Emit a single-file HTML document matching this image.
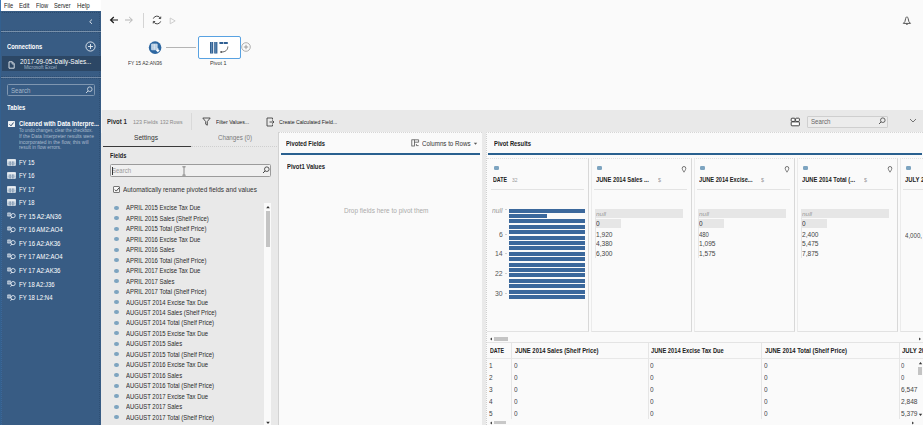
<!DOCTYPE html>
<html><head><meta charset="utf-8"><style>
html,body{margin:0;padding:0;}
body{width:923px;height:425px;overflow:hidden;position:relative;background:#fafafa;font-family:"Liberation Sans", sans-serif;}
div,span{box-sizing:border-box;}
</style></head><body>
<div style="position:absolute;left:0px;top:0px;width:101px;height:11px;background:#ffffff;"></div>
<div style="left:3.90px;position:absolute;top:2.65px;font-size:6.5px;line-height:6.5px;font-weight:400;font-style:normal;color:#222;white-space:nowrap;transform:scaleX(0.8680);transform-origin:0 0;">File</div>
<div style="left:18.90px;position:absolute;top:2.65px;font-size:6.5px;line-height:6.5px;font-weight:400;font-style:normal;color:#222;white-space:nowrap;transform:scaleX(0.9283);transform-origin:0 0;">Edit</div>
<div style="left:35.80px;position:absolute;top:2.65px;font-size:6.5px;line-height:6.5px;font-weight:400;font-style:normal;color:#222;white-space:nowrap;transform:scaleX(0.8810);transform-origin:0 0;">Flow</div>
<div style="left:54.00px;position:absolute;top:2.65px;font-size:6.5px;line-height:6.5px;font-weight:400;font-style:normal;color:#222;white-space:nowrap;transform:scaleX(0.8666);transform-origin:0 0;">Server</div>
<div style="left:77.00px;position:absolute;top:2.65px;font-size:6.5px;line-height:6.5px;font-weight:400;font-style:normal;color:#222;white-space:nowrap;transform:scaleX(0.9495);transform-origin:0 0;">Help</div>
<div style="position:absolute;left:0px;top:11px;width:101px;height:414px;background:#385c84;"></div>
<div style="position:absolute;left:0px;top:11px;width:1px;height:414px;background:#33608f;"></div>
<div style="position:absolute;left:1px;top:200px;width:1px;height:225px;background:transparent;border-left:1px dotted #3a689a"></div>
<div style="position:absolute;left:0px;top:0px;width:1px;height:11px;background:#3b78b8;"></div>
<div style="position:absolute;left:2px;top:12px;width:97px;height:1px;background:transparent;border-top:1px dotted #2a4a6c"></div>
<div style="position:absolute;left:99px;top:12px;width:1px;height:413px;background:transparent;border-left:1px dotted #2f5075"></div>
<div style="position:absolute;left:1px;top:31px;width:100px;height:1px;background:#7890aa;"></div>
<div style="position:absolute;left:1px;top:30px;width:100px;height:1px;background:transparent;border-top:1px dotted #2f5075"></div>
<div style="position:absolute;left:1px;top:32px;width:100px;height:1px;background:transparent;border-top:1px dotted #2f5075"></div>
<svg style="position:absolute;left:88px;top:18px" width="6" height="8" viewBox="0 0 6 8"><path d="M4 1.5 L1.7 3.7 L4 5.9" fill="none" stroke="#dfe6ee" stroke-width="0.9"/></svg>
<div style="left:6.80px;position:absolute;top:42.80px;font-size:7px;line-height:7px;font-weight:700;font-style:normal;color:#ffffff;white-space:nowrap;transform:scaleX(0.8304);transform-origin:0 0;">Connections</div>
<svg style="position:absolute;left:85px;top:41px" width="11" height="11" viewBox="0 0 11 11"><circle cx="5.5" cy="5.5" r="4.6" fill="none" stroke="#e6ecf2" stroke-width="0.9"/><path d="M5.5 3 V8 M3 5.5 H8" stroke="#e6ecf2" stroke-width="0.9"/></svg>
<div style="position:absolute;left:2px;top:56px;width:99px;height:15px;background:#2c4765;"></div>
<svg style="position:absolute;left:8px;top:60.5px" width="8" height="8" viewBox="0 0 8 8"><path d="M1 0.8 H4.3 L6.2 2.7 V7.2 H1 Z" fill="none" stroke="#e6ecf2" stroke-width="0.9"/><path d="M4.1 0.8 V3 H6.2" fill="none" stroke="#e6ecf2" stroke-width="0.7"/></svg>
<div style="left:19.90px;position:absolute;top:57.90px;font-size:7px;line-height:7px;font-weight:400;font-style:normal;color:#ffffff;white-space:nowrap;transform:scaleX(0.8983);transform-origin:0 0;">2017-09-05-Daily-Sales...</div>
<div style="left:24.00px;position:absolute;top:64.90px;font-size:5px;line-height:5px;font-weight:400;font-style:normal;color:#9fb2c6;white-space:nowrap;transform:scaleX(0.9703);transform-origin:0 0;">Microsoft Excel</div>
<div style="position:absolute;left:1px;top:77px;width:100px;height:1px;background:#7088a4;"></div>
<div style="position:absolute;left:1px;top:76px;width:100px;height:1px;background:transparent;border-top:1px dotted #2f5075"></div>
<div style="position:absolute;left:1px;top:78px;width:100px;height:1px;background:transparent;border-top:1px dotted #2f5075"></div>
<div style="position:absolute;left:7.4px;top:83.8px;width:87.6px;height:12px;background:transparent;border:1px solid #7f96b0;border-radius:1.5px"></div>
<div style="left:10.70px;position:absolute;top:87.65px;font-size:6.5px;line-height:6.5px;font-weight:400;font-style:normal;color:#a5b6c9;white-space:nowrap;transform:scaleX(0.9462);transform-origin:0 0;">Search</div>
<svg style="position:absolute;left:85px;top:86px" width="8" height="8" viewBox="0 0 8 8"><circle cx="4.8" cy="3.2" r="2.3" fill="none" stroke="#c9d4e0" stroke-width="0.9"/><path d="M3.2 4.8 L1 7" stroke="#c9d4e0" stroke-width="1"/></svg>
<div style="left:7.00px;position:absolute;top:104.00px;font-size:7px;line-height:7px;font-weight:700;font-style:normal;color:#ffffff;white-space:nowrap;transform:scaleX(0.8496);transform-origin:0 0;">Tables</div>
<div style="position:absolute;left:7.9px;top:120.5px;width:6.9px;height:6.3px;background:#eef1f4;border-radius:0.6px"></div>
<svg style="position:absolute;left:7.9px;top:120.5px" width="7" height="7" viewBox="0 0 7 7"><path d="M1.5 3.3 L3 4.8 L5.6 1.5" fill="none" stroke="#2d4b6d" stroke-width="1"/></svg>
<div style="left:18.80px;position:absolute;top:120.00px;font-size:7px;line-height:7px;font-weight:700;font-style:normal;color:#ffffff;white-space:nowrap;transform:scaleX(0.8498);transform-origin:0 0;">Cleaned with Data Interpre...</div>
<div style="left:19.30px;position:absolute;top:128.10px;font-size:5px;line-height:5px;font-weight:400;font-style:normal;color:#a9bbcd;white-space:nowrap;transform:scaleX(0.8779);transform-origin:0 0;">To undo changes, clear the checkbox.</div>
<div style="left:19.30px;position:absolute;top:133.80px;font-size:5px;line-height:5px;font-weight:400;font-style:normal;color:#a9bbcd;white-space:nowrap;transform:scaleX(0.9871);transform-origin:0 0;">If the Data Interpreter results were</div>
<div style="left:19.30px;position:absolute;top:139.50px;font-size:5px;line-height:5px;font-weight:400;font-style:normal;color:#a9bbcd;white-space:nowrap;transform:scaleX(0.9913);transform-origin:0 0;">incorporated in the flow, this will</div>
<div style="left:19.30px;position:absolute;top:145.10px;font-size:5px;line-height:5px;font-weight:400;font-style:normal;color:#a9bbcd;white-space:nowrap;transform:scaleX(0.9719);transform-origin:0 0;">result in flow errors.</div>
<svg style="position:absolute;left:7px;top:159px" width="9" height="7" viewBox="0 0 9 7"><rect x="0.4" y="0.4" width="8.2" height="6.2" rx="0.8" fill="#c2cfdc" stroke="#e8edf2" stroke-width="0.8"/><rect x="0.4" y="0.4" width="8.2" height="2" fill="#e8edf2"/><path d="M3.1 2.4 V6.6 M5.9 2.4 V6.6" stroke="#4f6f91" stroke-width="0.8"/><path d="M0.4 4.5 H8.6" stroke="#9fb1c5" stroke-width="0.5"/></svg>
<div style="left:18.80px;position:absolute;top:158.90px;font-size:7px;line-height:7px;font-weight:400;font-style:normal;color:#ffffff;white-space:nowrap;transform:scaleX(0.8350);transform-origin:0 0;">FY 15</div>
<svg style="position:absolute;left:7px;top:172px" width="9" height="7" viewBox="0 0 9 7"><rect x="0.4" y="0.4" width="8.2" height="6.2" rx="0.8" fill="#c2cfdc" stroke="#e8edf2" stroke-width="0.8"/><rect x="0.4" y="0.4" width="8.2" height="2" fill="#e8edf2"/><path d="M3.1 2.4 V6.6 M5.9 2.4 V6.6" stroke="#4f6f91" stroke-width="0.8"/><path d="M0.4 4.5 H8.6" stroke="#9fb1c5" stroke-width="0.5"/></svg>
<div style="left:18.80px;position:absolute;top:172.30px;font-size:7px;line-height:7px;font-weight:400;font-style:normal;color:#ffffff;white-space:nowrap;transform:scaleX(0.8350);transform-origin:0 0;">FY 16</div>
<svg style="position:absolute;left:7px;top:186px" width="9" height="7" viewBox="0 0 9 7"><rect x="0.4" y="0.4" width="8.2" height="6.2" rx="0.8" fill="#c2cfdc" stroke="#e8edf2" stroke-width="0.8"/><rect x="0.4" y="0.4" width="8.2" height="2" fill="#e8edf2"/><path d="M3.1 2.4 V6.6 M5.9 2.4 V6.6" stroke="#4f6f91" stroke-width="0.8"/><path d="M0.4 4.5 H8.6" stroke="#9fb1c5" stroke-width="0.5"/></svg>
<div style="left:18.80px;position:absolute;top:185.70px;font-size:7px;line-height:7px;font-weight:400;font-style:normal;color:#ffffff;white-space:nowrap;transform:scaleX(0.8350);transform-origin:0 0;">FY 17</div>
<svg style="position:absolute;left:7px;top:199px" width="9" height="7" viewBox="0 0 9 7"><rect x="0.4" y="0.4" width="8.2" height="6.2" rx="0.8" fill="#c2cfdc" stroke="#e8edf2" stroke-width="0.8"/><rect x="0.4" y="0.4" width="8.2" height="2" fill="#e8edf2"/><path d="M3.1 2.4 V6.6 M5.9 2.4 V6.6" stroke="#4f6f91" stroke-width="0.8"/><path d="M0.4 4.5 H8.6" stroke="#9fb1c5" stroke-width="0.5"/></svg>
<div style="left:18.80px;position:absolute;top:199.10px;font-size:7px;line-height:7px;font-weight:400;font-style:normal;color:#ffffff;white-space:nowrap;transform:scaleX(0.8350);transform-origin:0 0;">FY 18</div>
<svg style="position:absolute;left:7px;top:212.3px" width="10" height="9" viewBox="0 0 10 9"><rect x="0.2" y="0.6" width="3.8" height="3.8" rx="0.7" fill="#c9d5e2"/><path d="M0.2 2.1 H4 M2.1 2.1 V4.4" stroke="#58779a" stroke-width="0.5"/><circle cx="6.1" cy="3.6" r="2.1" fill="none" stroke="#e2e8ef" stroke-width="0.9"/><path d="M4.7 5.1 L3.6 6.7" stroke="#e2e8ef" stroke-width="1"/></svg>
<div style="left:18.90px;position:absolute;top:212.80px;font-size:7px;line-height:7px;font-weight:400;font-style:normal;color:#ffffff;white-space:nowrap;transform:scaleX(0.8810);transform-origin:0 0;">FY 15 A2:AN36</div>
<svg style="position:absolute;left:7px;top:225.85000000000002px" width="10" height="9" viewBox="0 0 10 9"><rect x="0.2" y="0.6" width="3.8" height="3.8" rx="0.7" fill="#c9d5e2"/><path d="M0.2 2.1 H4 M2.1 2.1 V4.4" stroke="#58779a" stroke-width="0.5"/><circle cx="6.1" cy="3.6" r="2.1" fill="none" stroke="#e2e8ef" stroke-width="0.9"/><path d="M4.7 5.1 L3.6 6.7" stroke="#e2e8ef" stroke-width="1"/></svg>
<div style="left:18.90px;position:absolute;top:226.35px;font-size:7px;line-height:7px;font-weight:400;font-style:normal;color:#ffffff;white-space:nowrap;transform:scaleX(0.8622);transform-origin:0 0;">FY 16 AM2:AO4</div>
<svg style="position:absolute;left:7px;top:239.4px" width="10" height="9" viewBox="0 0 10 9"><rect x="0.2" y="0.6" width="3.8" height="3.8" rx="0.7" fill="#c9d5e2"/><path d="M0.2 2.1 H4 M2.1 2.1 V4.4" stroke="#58779a" stroke-width="0.5"/><circle cx="6.1" cy="3.6" r="2.1" fill="none" stroke="#e2e8ef" stroke-width="0.9"/><path d="M4.7 5.1 L3.6 6.7" stroke="#e2e8ef" stroke-width="1"/></svg>
<div style="left:18.90px;position:absolute;top:239.90px;font-size:7px;line-height:7px;font-weight:400;font-style:normal;color:#ffffff;white-space:nowrap;transform:scaleX(0.8691);transform-origin:0 0;">FY 16 A2:AK36</div>
<svg style="position:absolute;left:7px;top:252.95000000000005px" width="10" height="9" viewBox="0 0 10 9"><rect x="0.2" y="0.6" width="3.8" height="3.8" rx="0.7" fill="#c9d5e2"/><path d="M0.2 2.1 H4 M2.1 2.1 V4.4" stroke="#58779a" stroke-width="0.5"/><circle cx="6.1" cy="3.6" r="2.1" fill="none" stroke="#e2e8ef" stroke-width="0.9"/><path d="M4.7 5.1 L3.6 6.7" stroke="#e2e8ef" stroke-width="1"/></svg>
<div style="left:18.90px;position:absolute;top:253.45px;font-size:7px;line-height:7px;font-weight:400;font-style:normal;color:#ffffff;white-space:nowrap;transform:scaleX(0.8622);transform-origin:0 0;">FY 17 AM2:AO4</div>
<svg style="position:absolute;left:7px;top:266.5px" width="10" height="9" viewBox="0 0 10 9"><rect x="0.2" y="0.6" width="3.8" height="3.8" rx="0.7" fill="#c9d5e2"/><path d="M0.2 2.1 H4 M2.1 2.1 V4.4" stroke="#58779a" stroke-width="0.5"/><circle cx="6.1" cy="3.6" r="2.1" fill="none" stroke="#e2e8ef" stroke-width="0.9"/><path d="M4.7 5.1 L3.6 6.7" stroke="#e2e8ef" stroke-width="1"/></svg>
<div style="left:18.90px;position:absolute;top:267.00px;font-size:7px;line-height:7px;font-weight:400;font-style:normal;color:#ffffff;white-space:nowrap;transform:scaleX(0.8691);transform-origin:0 0;">FY 17 A2:AK36</div>
<svg style="position:absolute;left:7px;top:280.05px" width="10" height="9" viewBox="0 0 10 9"><rect x="0.2" y="0.6" width="3.8" height="3.8" rx="0.7" fill="#c9d5e2"/><path d="M0.2 2.1 H4 M2.1 2.1 V4.4" stroke="#58779a" stroke-width="0.5"/><circle cx="6.1" cy="3.6" r="2.1" fill="none" stroke="#e2e8ef" stroke-width="0.9"/><path d="M4.7 5.1 L3.6 6.7" stroke="#e2e8ef" stroke-width="1"/></svg>
<div style="left:18.90px;position:absolute;top:280.55px;font-size:7px;line-height:7px;font-weight:400;font-style:normal;color:#ffffff;white-space:nowrap;transform:scaleX(0.8471);transform-origin:0 0;">FY 18 A2:J36</div>
<svg style="position:absolute;left:7px;top:293.6px" width="10" height="9" viewBox="0 0 10 9"><rect x="0.2" y="0.6" width="3.8" height="3.8" rx="0.7" fill="#c9d5e2"/><path d="M0.2 2.1 H4 M2.1 2.1 V4.4" stroke="#58779a" stroke-width="0.5"/><circle cx="6.1" cy="3.6" r="2.1" fill="none" stroke="#e2e8ef" stroke-width="0.9"/><path d="M4.7 5.1 L3.6 6.7" stroke="#e2e8ef" stroke-width="1"/></svg>
<div style="left:18.90px;position:absolute;top:294.10px;font-size:7px;line-height:7px;font-weight:400;font-style:normal;color:#ffffff;white-space:nowrap;transform:scaleX(0.8549);transform-origin:0 0;">FY 18 L2:N4</div>
<svg style="position:absolute;left:108.5px;top:15px" width="10" height="10" viewBox="0 0 10 10"><path d="M9 5 H2 M4.8 2 L1.6 5 L4.8 8" fill="none" stroke="#1a1a1a" stroke-width="1.2"/></svg>
<svg style="position:absolute;left:123.5px;top:15px" width="10" height="10" viewBox="0 0 10 10"><path d="M1 5 H8 M5.2 2 L8.4 5 L5.2 8" fill="none" stroke="#b4b4b4" stroke-width="1"/></svg>
<div style="position:absolute;left:143px;top:13px;width:1px;height:15px;background:#d4d4d4;"></div>
<svg style="position:absolute;left:151px;top:14px" width="12" height="12" viewBox="0 0 12 12"><path d="M2.3 4.6 A3.9 3.9 0 0 1 9.4 4.2 M9.7 7.4 A3.9 3.9 0 0 1 2.6 7.8" fill="none" stroke="#333" stroke-width="0.9"/><path d="M9.8 2.6 L9.6 4.6 L7.8 4.4" fill="none" stroke="#333" stroke-width="0.9"/><path d="M2.2 9.4 L2.4 7.4 L4.2 7.6" fill="none" stroke="#333" stroke-width="0.9"/></svg>
<svg style="position:absolute;left:168.5px;top:16.5px" width="8" height="8" viewBox="0 0 8 8"><path d="M1.2 1 L6.2 3.9 L1.2 6.8 Z" fill="none" stroke="#c8c8c8" stroke-width="0.9"/></svg>
<svg style="position:absolute;left:902px;top:16px" width="10" height="10" viewBox="0 0 10 10"><path d="M4.9 0.9 C4.2 0.9 3.9 1.6 3.7 2.4 L2.9 5.6 L1.3 7.4 H8.5 L6.9 5.6 L6.1 2.4 C5.9 1.6 5.6 0.9 4.9 0.9 Z" fill="none" stroke="#444" stroke-width="0.9"/><path d="M4 8.3 H5.8" stroke="#555" stroke-width="0.9"/></svg>
<svg style="position:absolute;left:148px;top:40px" width="15" height="15" viewBox="0 0 15 15"><circle cx="7.1" cy="7.6" r="6.3" fill="#2d67a1"/><rect x="3.6" y="4" width="5.6" height="5.8" fill="#a9c3dc"/><path d="M3.6 4 H9.2 V9.8 H3.6 Z M3.6 5.9 H9.2 M3.6 7.9 H9.2 M6.4 4 V9.8" fill="none" stroke="#e6eef6" stroke-width="0.6"/><path d="M9.8 8.3 V11.4 M8.4 10 L9.8 11.5 L11.2 10" fill="none" stroke="#ffffff" stroke-width="1.1"/></svg>
<div style="position:absolute;left:166px;top:46.6px;width:29.5px;height:1px;background:#b4b4b4;"></div>
<div style="position:absolute;left:198px;top:36.2px;width:43px;height:23px;background:#ffffff;border:1.6px solid #58a2e2;border-radius:2px"></div>
<svg style="position:absolute;left:209px;top:41px" width="21" height="14" viewBox="0 0 21 14"><rect x="1" y="1" width="3.2" height="11.5" fill="#2f5f92"/><rect x="5.2" y="1" width="3.2" height="11.5" fill="#2f5f92"/><path d="M2.6 1 V12.5 M6.8 1 V12.5" stroke="#8aaed0" stroke-width="0.6"/><path d="M10.4 2 H14.4 M15 2 H18.8" stroke="#2f5f92" stroke-width="1.8"/><path d="M18.8 5.5 C18.8 9 16.5 11 12.5 11" fill="none" stroke="#555" stroke-width="0.9"/><circle cx="12.2" cy="11" r="1" fill="#555"/></svg>
<svg style="position:absolute;left:240.5px;top:42px" width="10" height="10" viewBox="0 0 10 10"><circle cx="5" cy="5" r="4.3" fill="#fafafa" stroke="#9a9a9a" stroke-width="0.8"/><path d="M5 2.8 V7.2 M2.8 5 H7.2" stroke="#8a8a8a" stroke-width="0.8"/></svg>
<div style="left:127.80px;position:absolute;top:60.10px;font-size:6px;line-height:6px;font-weight:400;font-style:normal;color:#333;white-space:nowrap;transform:scaleX(0.8242);transform-origin:0 0;">FY 15 A2:AN36</div>
<div style="left:209.95px;position:absolute;top:60.20px;font-size:6px;line-height:6px;font-weight:400;font-style:normal;color:#333;white-space:nowrap;transform:scaleX(0.8995);transform-origin:0 0;">Pivot 1</div>
<div style="position:absolute;left:101px;top:110.2px;width:822px;height:22.4px;background:#e9e9e9;"></div>
<div style="position:absolute;left:101px;top:110.2px;width:1px;height:315px;background:#f3f3f3;"></div>
<div style="left:107.20px;position:absolute;top:117.80px;font-size:7px;line-height:7px;font-weight:700;font-style:normal;color:#2a2a2a;white-space:nowrap;transform:scaleX(0.8626);transform-origin:0 0;">Pivot 1</div>
<div style="left:132.60px;position:absolute;top:118.50px;font-size:6px;line-height:6px;font-weight:400;font-style:normal;color:#888;white-space:nowrap;transform:scaleX(0.9029);transform-origin:0 0;">123 Fields</div>
<div style="left:160.00px;position:absolute;top:118.50px;font-size:6px;line-height:6px;font-weight:400;font-style:normal;color:#888;white-space:nowrap;transform:scaleX(0.8431);transform-origin:0 0;">132 Rows</div>
<div style="position:absolute;left:191px;top:113.4px;width:1px;height:16.3px;background:#d9d9d9;"></div>
<svg style="position:absolute;left:202px;top:117px" width="9" height="9" viewBox="0 0 9 9"><path d="M0.8 1 H8.2 L5.3 4.6 V8.2 L3.7 7.2 V4.6 Z" fill="none" stroke="#444" stroke-width="0.9"/></svg>
<div style="left:216.00px;position:absolute;top:118.50px;font-size:6px;line-height:6px;font-weight:400;font-style:normal;color:#222;white-space:nowrap;transform:scaleX(0.8785);transform-origin:0 0;">Filter Values...</div>
<svg style="position:absolute;left:266px;top:116.5px" width="9" height="10" viewBox="0 0 9 10"><path d="M6.5 2.5 V1 H1 V9 H6.5 V7.5" fill="none" stroke="#444" stroke-width="0.9"/><path d="M3.5 5 H8 M6.3 3.3 L8 5 L6.3 6.7" fill="none" stroke="#444" stroke-width="0.9"/></svg>
<div style="left:278.70px;position:absolute;top:118.50px;font-size:6px;line-height:6px;font-weight:400;font-style:normal;color:#222;white-space:nowrap;transform:scaleX(0.8611);transform-origin:0 0;">Create Calculated Field...</div>
<svg style="position:absolute;left:790px;top:117px" width="11" height="10" viewBox="0 0 11 10"><rect x="1.2" y="1.2" width="3.8" height="3.2" rx="0.8" fill="#fff" stroke="#333" stroke-width="0.9"/><rect x="5.6" y="1.2" width="3.8" height="3.2" rx="0.8" fill="#fff" stroke="#333" stroke-width="0.9"/><rect x="1.2" y="4.9" width="8.2" height="3.9" rx="0.8" fill="#fff" stroke="#333" stroke-width="0.9"/></svg>
<div style="position:absolute;left:806.6px;top:115.5px;width:81px;height:12px;background:#ececec;border:1px solid #cfcfcf;border-radius:1px"></div>
<div style="left:810.50px;position:absolute;top:118.95px;font-size:6.5px;line-height:6.5px;font-weight:400;font-style:normal;color:#666;white-space:nowrap;transform:scaleX(0.9462);transform-origin:0 0;">Search</div>
<svg style="position:absolute;left:878px;top:117px" width="8" height="8" viewBox="0 0 8 8"><circle cx="4.8" cy="3.2" r="2.3" fill="none" stroke="#555" stroke-width="0.9"/><path d="M3.2 4.8 L1 7" stroke="#555" stroke-width="1"/></svg>
<svg style="position:absolute;left:909px;top:118px" width="8" height="5" viewBox="0 0 8 5"><path d="M1 1 L4 4 L7 1" fill="none" stroke="#666" stroke-width="0.9"/></svg>
<div style="position:absolute;left:101px;top:132.6px;width:178px;height:293px;background:#e9e9e9;"></div>
<div style="left:134.40px;position:absolute;top:133.90px;font-size:7px;line-height:7px;font-weight:400;font-style:normal;color:#333;white-space:nowrap;transform:scaleX(0.9487);transform-origin:0 0;">Settings</div>
<div style="left:217.50px;position:absolute;top:133.90px;font-size:7px;line-height:7px;font-weight:400;font-style:normal;color:#7a7a7a;white-space:nowrap;transform:scaleX(0.8824);transform-origin:0 0;">Changes (0)</div>
<div style="position:absolute;left:102.5px;top:145.8px;width:88px;height:1.6px;background:#3a3a3a;"></div>
<div style="position:absolute;left:190.5px;top:146.3px;width:88px;height:1px;background:transparent;border-top:1px dotted #cfcfcf"></div>
<div style="left:110.00px;position:absolute;top:151.90px;font-size:7px;line-height:7px;font-weight:700;font-style:normal;color:#222;white-space:nowrap;transform:scaleX(0.8056);transform-origin:0 0;">Fields</div>
<div style="position:absolute;left:109.9px;top:163.7px;width:161.6px;height:13px;background:#f0f0f0;border:1px solid #9b9b9b;border-radius:1.5px"></div>
<div style="left:112.00px;position:absolute;top:167.75px;font-size:6.5px;line-height:6.5px;font-weight:400;font-style:normal;color:#999;white-space:nowrap;transform:scaleX(0.9219);transform-origin:0 0;">Search</div>
<div style="position:absolute;left:112px;top:166.5px;width:0.8px;height:8.5px;background:#333;"></div>
<svg style="position:absolute;left:180.5px;top:165.5px" width="6" height="10" viewBox="0 0 6 10"><path d="M1.3 0.8 H4.7 M1.3 9.2 H4.7 M3 0.8 V9.2" stroke="#444" stroke-width="0.6"/></svg>
<svg style="position:absolute;left:262px;top:166px" width="8" height="8" viewBox="0 0 8 8"><circle cx="4.8" cy="3.2" r="2.3" fill="none" stroke="#444" stroke-width="0.9"/><path d="M3.2 4.8 L1 7" stroke="#444" stroke-width="1"/></svg>
<div style="position:absolute;left:112.8px;top:186px;width:7.3px;height:7px;background:#f7f7f7;border:0.8px solid #777;border-radius:1px"></div>
<svg style="position:absolute;left:112.8px;top:186px" width="8" height="7" viewBox="0 0 8 7"><path d="M1.8 3.6 L3.3 5.1 L6.2 1.7" fill="none" stroke="#333" stroke-width="0.9"/></svg>
<div style="left:123.00px;position:absolute;top:186.10px;font-size:7px;line-height:7px;font-weight:400;font-style:normal;color:#333;white-space:nowrap;transform:scaleX(0.9176);transform-origin:0 0;">Automatically rename pivoted fields and values</div>
<div style="position:absolute;left:114px;top:206px;width:4.5px;height:4px;background:#7da4c0;border-radius:50%"></div>
<div style="left:126.00px;position:absolute;top:204.30px;font-size:7px;line-height:7px;font-weight:400;font-style:normal;color:#2a2a2a;white-space:nowrap;transform:scaleX(0.8500);transform-origin:0 0;">APRIL 2015 Excise Tax Due</div>
<div style="position:absolute;left:114px;top:216px;width:4.5px;height:4px;background:#7da4c0;border-radius:50%"></div>
<div style="left:126.00px;position:absolute;top:214.77px;font-size:7px;line-height:7px;font-weight:400;font-style:normal;color:#2a2a2a;white-space:nowrap;transform:scaleX(0.8500);transform-origin:0 0;">APRIL 2015 Sales (Shelf Price)</div>
<div style="position:absolute;left:114px;top:227px;width:4.5px;height:4px;background:#7da4c0;border-radius:50%"></div>
<div style="left:126.00px;position:absolute;top:225.24px;font-size:7px;line-height:7px;font-weight:400;font-style:normal;color:#2a2a2a;white-space:nowrap;transform:scaleX(0.8500);transform-origin:0 0;">APRIL 2015 Total (Shelf Price)</div>
<div style="position:absolute;left:114px;top:237px;width:4.5px;height:4px;background:#7da4c0;border-radius:50%"></div>
<div style="left:126.00px;position:absolute;top:235.71px;font-size:7px;line-height:7px;font-weight:400;font-style:normal;color:#2a2a2a;white-space:nowrap;transform:scaleX(0.8500);transform-origin:0 0;">APRIL 2016 Excise Tax Due</div>
<div style="position:absolute;left:114px;top:248px;width:4.5px;height:4px;background:#7da4c0;border-radius:50%"></div>
<div style="left:126.00px;position:absolute;top:246.18px;font-size:7px;line-height:7px;font-weight:400;font-style:normal;color:#2a2a2a;white-space:nowrap;transform:scaleX(0.8500);transform-origin:0 0;">APRIL 2016 Sales</div>
<div style="position:absolute;left:114px;top:258px;width:4.5px;height:4px;background:#7da4c0;border-radius:50%"></div>
<div style="left:126.00px;position:absolute;top:256.65px;font-size:7px;line-height:7px;font-weight:400;font-style:normal;color:#2a2a2a;white-space:nowrap;transform:scaleX(0.8500);transform-origin:0 0;">APRIL 2016 Total (Shelf Price)</div>
<div style="position:absolute;left:114px;top:269px;width:4.5px;height:4px;background:#7da4c0;border-radius:50%"></div>
<div style="left:126.00px;position:absolute;top:267.12px;font-size:7px;line-height:7px;font-weight:400;font-style:normal;color:#2a2a2a;white-space:nowrap;transform:scaleX(0.8500);transform-origin:0 0;">APRIL 2017 Excise Tax Due</div>
<div style="position:absolute;left:114px;top:279px;width:4.5px;height:4px;background:#7da4c0;border-radius:50%"></div>
<div style="left:126.00px;position:absolute;top:277.59px;font-size:7px;line-height:7px;font-weight:400;font-style:normal;color:#2a2a2a;white-space:nowrap;transform:scaleX(0.8500);transform-origin:0 0;">APRIL 2017 Sales</div>
<div style="position:absolute;left:114px;top:290px;width:4.5px;height:4px;background:#7da4c0;border-radius:50%"></div>
<div style="left:126.00px;position:absolute;top:288.06px;font-size:7px;line-height:7px;font-weight:400;font-style:normal;color:#2a2a2a;white-space:nowrap;transform:scaleX(0.8500);transform-origin:0 0;">APRIL 2017 Total (Shelf Price)</div>
<div style="position:absolute;left:114px;top:300px;width:4.5px;height:4px;background:#7da4c0;border-radius:50%"></div>
<div style="left:126.00px;position:absolute;top:298.53px;font-size:7px;line-height:7px;font-weight:400;font-style:normal;color:#2a2a2a;white-space:nowrap;transform:scaleX(0.8500);transform-origin:0 0;">AUGUST 2014 Excise Tax Due</div>
<div style="position:absolute;left:114px;top:310px;width:4.5px;height:4px;background:#7da4c0;border-radius:50%"></div>
<div style="left:126.00px;position:absolute;top:309.00px;font-size:7px;line-height:7px;font-weight:400;font-style:normal;color:#2a2a2a;white-space:nowrap;transform:scaleX(0.8500);transform-origin:0 0;">AUGUST 2014 Sales (Shelf Price)</div>
<div style="position:absolute;left:114px;top:321px;width:4.5px;height:4px;background:#7da4c0;border-radius:50%"></div>
<div style="left:126.00px;position:absolute;top:319.47px;font-size:7px;line-height:7px;font-weight:400;font-style:normal;color:#2a2a2a;white-space:nowrap;transform:scaleX(0.8500);transform-origin:0 0;">AUGUST 2014 Total (Shelf Price)</div>
<div style="position:absolute;left:114px;top:331px;width:4.5px;height:4px;background:#7da4c0;border-radius:50%"></div>
<div style="left:126.00px;position:absolute;top:329.94px;font-size:7px;line-height:7px;font-weight:400;font-style:normal;color:#2a2a2a;white-space:nowrap;transform:scaleX(0.8500);transform-origin:0 0;">AUGUST 2015 Excise Tax Due</div>
<div style="position:absolute;left:114px;top:342px;width:4.5px;height:4px;background:#7da4c0;border-radius:50%"></div>
<div style="left:126.00px;position:absolute;top:340.41px;font-size:7px;line-height:7px;font-weight:400;font-style:normal;color:#2a2a2a;white-space:nowrap;transform:scaleX(0.8500);transform-origin:0 0;">AUGUST 2015 Sales</div>
<div style="position:absolute;left:114px;top:352px;width:4.5px;height:4px;background:#7da4c0;border-radius:50%"></div>
<div style="left:126.00px;position:absolute;top:350.88px;font-size:7px;line-height:7px;font-weight:400;font-style:normal;color:#2a2a2a;white-space:nowrap;transform:scaleX(0.8500);transform-origin:0 0;">AUGUST 2015 Total (Shelf Price)</div>
<div style="position:absolute;left:114px;top:363px;width:4.5px;height:4px;background:#7da4c0;border-radius:50%"></div>
<div style="left:126.00px;position:absolute;top:361.35px;font-size:7px;line-height:7px;font-weight:400;font-style:normal;color:#2a2a2a;white-space:nowrap;transform:scaleX(0.8500);transform-origin:0 0;">AUGUST 2016 Excise Tax Due</div>
<div style="position:absolute;left:114px;top:373px;width:4.5px;height:4px;background:#7da4c0;border-radius:50%"></div>
<div style="left:126.00px;position:absolute;top:371.82px;font-size:7px;line-height:7px;font-weight:400;font-style:normal;color:#2a2a2a;white-space:nowrap;transform:scaleX(0.8500);transform-origin:0 0;">AUGUST 2016 Sales</div>
<div style="position:absolute;left:114px;top:384px;width:4.5px;height:4px;background:#7da4c0;border-radius:50%"></div>
<div style="left:126.00px;position:absolute;top:382.29px;font-size:7px;line-height:7px;font-weight:400;font-style:normal;color:#2a2a2a;white-space:nowrap;transform:scaleX(0.8500);transform-origin:0 0;">AUGUST 2016 Total (Shelf Price)</div>
<div style="position:absolute;left:114px;top:394px;width:4.5px;height:4px;background:#7da4c0;border-radius:50%"></div>
<div style="left:126.00px;position:absolute;top:392.76px;font-size:7px;line-height:7px;font-weight:400;font-style:normal;color:#2a2a2a;white-space:nowrap;transform:scaleX(0.8500);transform-origin:0 0;">AUGUST 2017 Excise Tax Due</div>
<div style="position:absolute;left:114px;top:405px;width:4.5px;height:4px;background:#7da4c0;border-radius:50%"></div>
<div style="left:126.00px;position:absolute;top:403.23px;font-size:7px;line-height:7px;font-weight:400;font-style:normal;color:#2a2a2a;white-space:nowrap;transform:scaleX(0.8500);transform-origin:0 0;">AUGUST 2017 Sales</div>
<div style="position:absolute;left:114px;top:415px;width:4.5px;height:4px;background:#7da4c0;border-radius:50%"></div>
<div style="left:126.00px;position:absolute;top:413.70px;font-size:7px;line-height:7px;font-weight:400;font-style:normal;color:#2a2a2a;white-space:nowrap;transform:scaleX(0.8500);transform-origin:0 0;">AUGUST 2017 Total (Shelf Price)</div>
<div style="position:absolute;left:264px;top:203px;width:7.2px;height:222px;background:#fafafa;"></div>
<svg style="position:absolute;left:265px;top:204.5px" width="6" height="4" viewBox="0 0 6 4"><path d="M1.2 3.2 L3 1 L4.8 3.2 Z" fill="#333"/></svg>
<div style="position:absolute;left:266px;top:210.5px;width:4.2px;height:36.7px;background:#c4c4c4;"></div>
<svg style="position:absolute;left:265px;top:421px" width="6" height="4" viewBox="0 0 6 4"><path d="M1.2 0.8 L3 3 L4.8 0.8 Z" fill="#333"/></svg>
<div style="position:absolute;left:278px;top:132px;width:1px;height:293px;background:#d2d2d2;"></div>
<div style="position:absolute;left:279px;top:132px;width:203px;height:293px;background:#fafafa;border-top:1px dotted #d6d6d6"></div>
<div style="left:286.20px;position:absolute;top:139.70px;font-size:7px;line-height:7px;font-weight:700;font-style:normal;color:#222;white-space:nowrap;transform:scaleX(0.8216);transform-origin:0 0;">Pivoted Fields</div>
<svg style="position:absolute;left:410.5px;top:139px" width="9" height="8" viewBox="0 0 9 8"><rect x="0.8" y="0.8" width="2.6" height="6.2" fill="none" stroke="#555" stroke-width="0.8"/><path d="M3.4 0.8 H7.6 V3.2 H3.4 M5.4 5 V6.6 H7.6" fill="none" stroke="#555" stroke-width="0.8"/></svg>
<div style="left:421.50px;position:absolute;top:139.80px;font-size:7px;line-height:7px;font-weight:400;font-style:normal;color:#333;white-space:nowrap;transform:scaleX(0.8841);transform-origin:0 0;">Columns to Rows</div>
<svg style="position:absolute;left:473px;top:141.5px" width="5" height="4" viewBox="0 0 5 4"><path d="M0.8 0.8 L2.5 2.8 L4.2 0.8 Z" fill="#555"/></svg>
<div style="position:absolute;left:280.6px;top:153px;width:199.6px;height:2.2px;background:#29608f;"></div>
<div style="left:286.50px;position:absolute;top:163.30px;font-size:7px;line-height:7px;font-weight:700;font-style:normal;color:#222;white-space:nowrap;transform:scaleX(0.8418);transform-origin:0 0;">Pivot1 Values</div>
<div style="left:343.50px;position:absolute;top:206.70px;font-size:7px;line-height:7px;font-weight:400;font-style:normal;color:#aaa;white-space:nowrap;transform:scaleX(0.9241);transform-origin:0 0;">Drop fields here to pivot them</div>
<div style="position:absolute;left:482px;top:132.6px;width:4px;height:293px;background:#e9e9e9;"></div>
<div style="position:absolute;left:486px;top:132px;width:437px;height:293px;background:#fafafa;border-top:1px dotted #d6d6d6;border-left:1px dotted #d0d0d0"></div>
<div style="left:493.90px;position:absolute;top:139.70px;font-size:7px;line-height:7px;font-weight:700;font-style:normal;color:#222;white-space:nowrap;transform:scaleX(0.8341);transform-origin:0 0;">Pivot Results</div>
<div style="position:absolute;left:488.2px;top:153px;width:433.5px;height:2.2px;background:#29608f;"></div>
<div style="position:absolute;left:487px;top:158px;width:102px;height:174px;background:#fafafa;border-right:1px solid #d8d8d8;border-bottom:1px solid #e2e2e2;border-top:1px dotted #e0e0e0"></div>
<div style="position:absolute;left:494.40000000000003px;top:165.8px;width:4.2px;height:4.4px;background:#7da4c0;border-radius:1.3px"></div>
<div style="left:492.60px;position:absolute;top:176.00px;font-size:7px;line-height:7px;font-weight:700;font-style:normal;color:#222;white-space:nowrap;transform:scaleX(0.7495);transform-origin:0 0;">DATE</div>
<div style="left:512.30px;position:absolute;top:177.85px;font-size:5.5px;line-height:5.5px;font-weight:400;font-style:normal;color:#999;white-space:nowrap;transform:scaleX(0.8980);transform-origin:0 0;">32</div>
<div style="position:absolute;left:491.1px;top:189px;width:93px;height:1px;background:#e3e3e3;"></div>
<div style="position:absolute;left:591px;top:158px;width:101px;height:174px;background:#fafafa;border-right:1px solid #d8d8d8;border-left:1px solid #ebebeb;border-bottom:1px solid #e2e2e2;border-top:1px dotted #e0e0e0"></div>
<div style="position:absolute;left:597.4px;top:165.8px;width:4.2px;height:4.4px;background:#7da4c0;border-radius:1.3px"></div>
<svg style="position:absolute;left:680.6px;top:164.5px" width="6" height="8" viewBox="0 0 6 8"><path d="M3 7.2 C2.4 6 1.2 4.7 1.2 3.3 A1.8 1.8 0 0 1 4.8 3.3 C4.8 4.7 3.6 6 3 7.2 Z" fill="none" stroke="#555" stroke-width="0.8"/></svg>
<div style="left:595.60px;position:absolute;top:176.00px;font-size:7px;line-height:7px;font-weight:700;font-style:normal;color:#222;white-space:nowrap;transform:scaleX(0.8222);transform-origin:0 0;">JUNE 2014 Sales ...</div>
<div style="left:657.60px;position:absolute;top:177.85px;font-size:5.5px;line-height:5.5px;font-weight:400;font-style:normal;color:#999;white-space:nowrap;transform:scaleX(0.9796);transform-origin:0 0;">$</div>
<div style="position:absolute;left:594.1px;top:189px;width:93px;height:1px;background:#e3e3e3;"></div>
<div style="position:absolute;left:694px;top:158px;width:101px;height:174px;background:#fafafa;border-right:1px solid #d8d8d8;border-left:1px solid #ebebeb;border-bottom:1px solid #e2e2e2;border-top:1px dotted #e0e0e0"></div>
<div style="position:absolute;left:700.4px;top:165.8px;width:4.2px;height:4.4px;background:#7da4c0;border-radius:1.3px"></div>
<svg style="position:absolute;left:783.6px;top:164.5px" width="6" height="8" viewBox="0 0 6 8"><path d="M3 7.2 C2.4 6 1.2 4.7 1.2 3.3 A1.8 1.8 0 0 1 4.8 3.3 C4.8 4.7 3.6 6 3 7.2 Z" fill="none" stroke="#555" stroke-width="0.8"/></svg>
<div style="left:698.60px;position:absolute;top:176.00px;font-size:7px;line-height:7px;font-weight:700;font-style:normal;color:#222;white-space:nowrap;transform:scaleX(0.8087);transform-origin:0 0;">JUNE 2014 Excise...</div>
<div style="left:760.60px;position:absolute;top:177.85px;font-size:5.5px;line-height:5.5px;font-weight:400;font-style:normal;color:#999;white-space:nowrap;transform:scaleX(0.9796);transform-origin:0 0;">$</div>
<div style="position:absolute;left:697.1px;top:189px;width:93px;height:1px;background:#e3e3e3;"></div>
<div style="position:absolute;left:797px;top:158px;width:101px;height:174px;background:#fafafa;border-right:1px solid #d8d8d8;border-left:1px solid #ebebeb;border-bottom:1px solid #e2e2e2;border-top:1px dotted #e0e0e0"></div>
<div style="position:absolute;left:803.4px;top:165.8px;width:4.2px;height:4.4px;background:#7da4c0;border-radius:1.3px"></div>
<svg style="position:absolute;left:886.6px;top:164.5px" width="6" height="8" viewBox="0 0 6 8"><path d="M3 7.2 C2.4 6 1.2 4.7 1.2 3.3 A1.8 1.8 0 0 1 4.8 3.3 C4.8 4.7 3.6 6 3 7.2 Z" fill="none" stroke="#555" stroke-width="0.8"/></svg>
<div style="left:801.60px;position:absolute;top:176.00px;font-size:7px;line-height:7px;font-weight:700;font-style:normal;color:#222;white-space:nowrap;transform:scaleX(0.8223);transform-origin:0 0;">JUNE 2014 Total (...</div>
<div style="left:863.60px;position:absolute;top:177.85px;font-size:5.5px;line-height:5.5px;font-weight:400;font-style:normal;color:#999;white-space:nowrap;transform:scaleX(0.9796);transform-origin:0 0;">$</div>
<div style="position:absolute;left:800.1px;top:189px;width:93px;height:1px;background:#e3e3e3;"></div>
<div style="position:absolute;left:900px;top:158px;width:101px;height:174px;background:#fafafa;border-right:1px solid #d8d8d8;border-left:1px solid #ebebeb;border-bottom:1px solid #e2e2e2;border-top:1px dotted #e0e0e0"></div>
<div style="position:absolute;left:906.4px;top:165.8px;width:4.2px;height:4.4px;background:#7da4c0;border-radius:1.3px"></div>
<svg style="position:absolute;left:989.6px;top:164.5px" width="6" height="8" viewBox="0 0 6 8"><path d="M3 7.2 C2.4 6 1.2 4.7 1.2 3.3 A1.8 1.8 0 0 1 4.8 3.3 C4.8 4.7 3.6 6 3 7.2 Z" fill="none" stroke="#555" stroke-width="0.8"/></svg>
<div style="left:904.60px;position:absolute;top:176.00px;font-size:7px;line-height:7px;font-weight:700;font-style:normal;color:#222;white-space:nowrap;transform:scaleX(0.8425);transform-origin:0 0;">JULY 2014 Sales ...</div>
<div style="left:966.60px;position:absolute;top:177.85px;font-size:5.5px;line-height:5.5px;font-weight:400;font-style:normal;color:#999;white-space:nowrap;transform:scaleX(0.9796);transform-origin:0 0;">$</div>
<div style="position:absolute;left:903.1px;top:189px;width:93px;height:1px;background:#e3e3e3;"></div>
<div style="left:492.10px;position:absolute;top:208.15px;font-size:6.5px;line-height:6.5px;font-weight:400;font-style:italic;color:#999;white-space:nowrap;transform:scaleX(1.0370);transform-origin:0 0;">null</div>
<div style="left:498.80px;position:absolute;top:230.60px;font-size:7px;line-height:7px;font-weight:400;font-style:normal;color:#555;white-space:nowrap;transform:scaleX(0.9728);transform-origin:0 0;">6</div>
<div style="left:495.00px;position:absolute;top:250.40px;font-size:7px;line-height:7px;font-weight:400;font-style:normal;color:#555;white-space:nowrap;transform:scaleX(0.9747);transform-origin:0 0;">14</div>
<div style="left:495.00px;position:absolute;top:270.20px;font-size:7px;line-height:7px;font-weight:400;font-style:normal;color:#555;white-space:nowrap;transform:scaleX(0.9747);transform-origin:0 0;">22</div>
<div style="left:495.00px;position:absolute;top:290.20px;font-size:7px;line-height:7px;font-weight:400;font-style:normal;color:#555;white-space:nowrap;transform:scaleX(0.9747);transform-origin:0 0;">30</div>
<div style="position:absolute;left:505px;top:208.5px;width:2px;height:1px;background:#d0d0d0;"></div>
<div style="position:absolute;left:505px;top:233.6px;width:2px;height:1px;background:#d0d0d0;"></div>
<div style="position:absolute;left:505px;top:253.4px;width:2px;height:1px;background:#d0d0d0;"></div>
<div style="position:absolute;left:505px;top:273.2px;width:2px;height:1px;background:#d0d0d0;"></div>
<div style="position:absolute;left:505px;top:293.2px;width:2px;height:1px;background:#d0d0d0;"></div>
<div style="position:absolute;left:509.2px;top:208.5px;width:75.4px;height:4.2px;background:#3b689c;"></div>
<div style="position:absolute;left:509.2px;top:213.9px;width:37.5px;height:4.2px;background:#3b689c;"></div>
<div style="position:absolute;left:509.2px;top:219.3px;width:75.4px;height:4.2px;background:#3b689c;"></div>
<div style="position:absolute;left:509.2px;top:224.7px;width:75.4px;height:4.2px;background:#3b689c;"></div>
<div style="position:absolute;left:509.2px;top:230.1px;width:75.4px;height:4.2px;background:#3b689c;"></div>
<div style="position:absolute;left:509.2px;top:235.5px;width:75.4px;height:4.2px;background:#3b689c;"></div>
<div style="position:absolute;left:509.2px;top:240.9px;width:75.4px;height:4.2px;background:#3b689c;"></div>
<div style="position:absolute;left:509.2px;top:246.3px;width:75.4px;height:4.2px;background:#3b689c;"></div>
<div style="position:absolute;left:509.2px;top:251.7px;width:75.4px;height:4.2px;background:#3b689c;"></div>
<div style="position:absolute;left:509.2px;top:257.1px;width:75.4px;height:4.2px;background:#3b689c;"></div>
<div style="position:absolute;left:509.2px;top:262.5px;width:75.4px;height:4.2px;background:#3b689c;"></div>
<div style="position:absolute;left:509.2px;top:267.9px;width:75.4px;height:4.2px;background:#3b689c;"></div>
<div style="position:absolute;left:509.2px;top:273.3px;width:75.4px;height:4.2px;background:#3b689c;"></div>
<div style="position:absolute;left:509.2px;top:278.7px;width:75.4px;height:4.2px;background:#3b689c;"></div>
<div style="position:absolute;left:509.2px;top:284.1px;width:75.4px;height:4.2px;background:#3b689c;"></div>
<div style="position:absolute;left:509.2px;top:289.5px;width:75.4px;height:4.2px;background:#3b689c;"></div>
<div style="position:absolute;left:509.2px;top:294.9px;width:75.4px;height:4.2px;background:#3b689c;"></div>
<div style="position:absolute;left:594.6px;top:209.4px;width:0.8px;height:49px;background:#e6e6e6;"></div>
<div style="position:absolute;left:594.8000000000001px;top:209.4px;width:88px;height:8.3px;background:#e6e6e6;"></div>
<div style="left:596.40px;position:absolute;top:210.60px;font-size:6px;line-height:6px;font-weight:400;font-style:italic;color:#9a9a9a;white-space:nowrap;transform:scaleX(1.0702);transform-origin:0 0;">null</div>
<div style="position:absolute;left:594.8000000000001px;top:219.2px;width:26.5px;height:8.8px;background:#e6e6e6;"></div>
<div style="left:596.40px;position:absolute;top:220.10px;font-size:7px;line-height:7px;font-weight:400;font-style:normal;color:#333;white-space:nowrap;transform:scaleX(0.9216);transform-origin:0 0;">0</div>
<div style="left:596.40px;position:absolute;top:230.50px;font-size:7px;line-height:7px;font-weight:400;font-style:normal;color:#444;white-space:nowrap;transform:scaleX(0.9412);transform-origin:0 0;">1,920</div>
<div style="left:596.40px;position:absolute;top:240.35px;font-size:7px;line-height:7px;font-weight:400;font-style:normal;color:#444;white-space:nowrap;transform:scaleX(0.9412);transform-origin:0 0;">4,380</div>
<div style="left:596.40px;position:absolute;top:250.20px;font-size:7px;line-height:7px;font-weight:400;font-style:normal;color:#444;white-space:nowrap;transform:scaleX(0.9412);transform-origin:0 0;">6,300</div>
<div style="position:absolute;left:697.6px;top:209.4px;width:0.8px;height:49px;background:#e6e6e6;"></div>
<div style="position:absolute;left:697.8000000000001px;top:209.4px;width:88px;height:8.3px;background:#e6e6e6;"></div>
<div style="left:699.40px;position:absolute;top:210.60px;font-size:6px;line-height:6px;font-weight:400;font-style:italic;color:#9a9a9a;white-space:nowrap;transform:scaleX(1.0702);transform-origin:0 0;">null</div>
<div style="position:absolute;left:697.8000000000001px;top:219.2px;width:26.5px;height:8.8px;background:#e6e6e6;"></div>
<div style="left:699.40px;position:absolute;top:220.10px;font-size:7px;line-height:7px;font-weight:400;font-style:normal;color:#333;white-space:nowrap;transform:scaleX(0.9216);transform-origin:0 0;">0</div>
<div style="left:699.40px;position:absolute;top:230.50px;font-size:7px;line-height:7px;font-weight:400;font-style:normal;color:#444;white-space:nowrap;transform:scaleX(0.8471);transform-origin:0 0;">480</div>
<div style="left:699.40px;position:absolute;top:240.35px;font-size:7px;line-height:7px;font-weight:400;font-style:normal;color:#444;white-space:nowrap;transform:scaleX(0.9412);transform-origin:0 0;">1,095</div>
<div style="left:699.40px;position:absolute;top:250.20px;font-size:7px;line-height:7px;font-weight:400;font-style:normal;color:#444;white-space:nowrap;transform:scaleX(0.9412);transform-origin:0 0;">1,575</div>
<div style="position:absolute;left:800.6px;top:209.4px;width:0.8px;height:49px;background:#e6e6e6;"></div>
<div style="position:absolute;left:800.8000000000001px;top:209.4px;width:88px;height:8.3px;background:#e6e6e6;"></div>
<div style="left:802.40px;position:absolute;top:210.60px;font-size:6px;line-height:6px;font-weight:400;font-style:italic;color:#9a9a9a;white-space:nowrap;transform:scaleX(1.0702);transform-origin:0 0;">null</div>
<div style="position:absolute;left:800.8000000000001px;top:219.2px;width:26.5px;height:8.8px;background:#e6e6e6;"></div>
<div style="left:802.40px;position:absolute;top:220.10px;font-size:7px;line-height:7px;font-weight:400;font-style:normal;color:#333;white-space:nowrap;transform:scaleX(0.9216);transform-origin:0 0;">0</div>
<div style="left:802.40px;position:absolute;top:230.50px;font-size:7px;line-height:7px;font-weight:400;font-style:normal;color:#444;white-space:nowrap;transform:scaleX(0.9412);transform-origin:0 0;">2,400</div>
<div style="left:802.40px;position:absolute;top:240.35px;font-size:7px;line-height:7px;font-weight:400;font-style:normal;color:#444;white-space:nowrap;transform:scaleX(0.9412);transform-origin:0 0;">5,475</div>
<div style="left:802.40px;position:absolute;top:250.20px;font-size:7px;line-height:7px;font-weight:400;font-style:normal;color:#444;white-space:nowrap;transform:scaleX(0.9412);transform-origin:0 0;">7,875</div>
<div style="left:904.90px;position:absolute;top:231.70px;font-size:7px;line-height:7px;font-weight:400;font-style:normal;color:#444;white-space:nowrap;transform:scaleX(0.8732);transform-origin:0 0;">4,000,</div>
<svg style="position:absolute;left:489px;top:336.5px" width="4" height="4" viewBox="0 0 4 4"><path d="M3 0.5 L1 2 L3 3.5 Z" fill="#444"/></svg>
<div style="position:absolute;left:494px;top:336.8px;width:14.4px;height:4.4px;background:#c4c4c4;"></div>
<svg style="position:absolute;left:918px;top:337px" width="4" height="4" viewBox="0 0 4 4"><path d="M1 0.5 L3 2 L1 3.5 Z" fill="#444"/></svg>
<div style="position:absolute;left:487px;top:342.3px;width:436px;height:1px;background:#e4e4e4;"></div>
<div style="position:absolute;left:487px;top:357.8px;width:436px;height:1px;background:#e8e8e8;"></div>
<div style="position:absolute;left:511.2px;top:343px;width:1px;height:75.7px;background:#e6e6e6;"></div>
<div style="position:absolute;left:647.6px;top:343px;width:1px;height:75.7px;background:#e6e6e6;"></div>
<div style="position:absolute;left:761.4px;top:343px;width:1px;height:75.7px;background:#e6e6e6;"></div>
<div style="position:absolute;left:898.7px;top:343px;width:1px;height:75.7px;background:#e6e6e6;"></div>
<div style="left:489.60px;position:absolute;top:347.00px;font-size:7px;line-height:7px;font-weight:700;font-style:normal;color:#222;white-space:nowrap;transform:scaleX(0.7548);transform-origin:0 0;">DATE</div>
<div style="left:514.90px;position:absolute;top:347.00px;font-size:7px;line-height:7px;font-weight:700;font-style:normal;color:#222;white-space:nowrap;transform:scaleX(0.8416);transform-origin:0 0;">JUNE 2014 Sales (Shelf Price)</div>
<div style="left:651.20px;position:absolute;top:347.00px;font-size:7px;line-height:7px;font-weight:700;font-style:normal;color:#222;white-space:nowrap;transform:scaleX(0.8170);transform-origin:0 0;">JUNE 2014 Excise Tax Due</div>
<div style="left:765.20px;position:absolute;top:347.00px;font-size:7px;line-height:7px;font-weight:700;font-style:normal;color:#222;white-space:nowrap;transform:scaleX(0.8443);transform-origin:0 0;">JUNE 2014 Total (Shelf Price)</div>
<div style="left:901.80px;position:absolute;top:347.00px;font-size:7px;line-height:7px;font-weight:700;font-style:normal;color:#222;white-space:nowrap;transform:scaleX(0.8600);transform-origin:0 0;">JULY 2014 Sales (Shelf Price)</div>
<div style="left:488.80px;position:absolute;top:361.80px;font-size:7px;line-height:7px;font-weight:400;font-style:normal;color:#444;white-space:nowrap;transform:scaleX(0.9216);transform-origin:0 0;">1</div>
<div style="left:513.60px;position:absolute;top:361.80px;font-size:7px;line-height:7px;font-weight:400;font-style:normal;color:#444;white-space:nowrap;transform:scaleX(0.9216);transform-origin:0 0;">0</div>
<div style="left:650.20px;position:absolute;top:361.80px;font-size:7px;line-height:7px;font-weight:400;font-style:normal;color:#444;white-space:nowrap;transform:scaleX(0.9216);transform-origin:0 0;">0</div>
<div style="left:764.00px;position:absolute;top:361.80px;font-size:7px;line-height:7px;font-weight:400;font-style:normal;color:#444;white-space:nowrap;transform:scaleX(0.9216);transform-origin:0 0;">0</div>
<div style="left:900.80px;position:absolute;top:361.80px;font-size:7px;line-height:7px;font-weight:400;font-style:normal;color:#444;white-space:nowrap;transform:scaleX(0.8448);transform-origin:0 0;">0</div>
<div style="left:488.80px;position:absolute;top:373.85px;font-size:7px;line-height:7px;font-weight:400;font-style:normal;color:#444;white-space:nowrap;transform:scaleX(0.9216);transform-origin:0 0;">2</div>
<div style="left:513.60px;position:absolute;top:373.85px;font-size:7px;line-height:7px;font-weight:400;font-style:normal;color:#444;white-space:nowrap;transform:scaleX(0.9216);transform-origin:0 0;">0</div>
<div style="left:650.20px;position:absolute;top:373.85px;font-size:7px;line-height:7px;font-weight:400;font-style:normal;color:#444;white-space:nowrap;transform:scaleX(0.9216);transform-origin:0 0;">0</div>
<div style="left:764.00px;position:absolute;top:373.85px;font-size:7px;line-height:7px;font-weight:400;font-style:normal;color:#444;white-space:nowrap;transform:scaleX(0.9216);transform-origin:0 0;">0</div>
<div style="left:900.80px;position:absolute;top:373.85px;font-size:7px;line-height:7px;font-weight:400;font-style:normal;color:#444;white-space:nowrap;transform:scaleX(0.8448);transform-origin:0 0;">0</div>
<div style="left:488.80px;position:absolute;top:385.90px;font-size:7px;line-height:7px;font-weight:400;font-style:normal;color:#444;white-space:nowrap;transform:scaleX(0.9216);transform-origin:0 0;">3</div>
<div style="left:513.60px;position:absolute;top:385.90px;font-size:7px;line-height:7px;font-weight:400;font-style:normal;color:#444;white-space:nowrap;transform:scaleX(0.9216);transform-origin:0 0;">0</div>
<div style="left:650.20px;position:absolute;top:385.90px;font-size:7px;line-height:7px;font-weight:400;font-style:normal;color:#444;white-space:nowrap;transform:scaleX(0.9216);transform-origin:0 0;">0</div>
<div style="left:764.00px;position:absolute;top:385.90px;font-size:7px;line-height:7px;font-weight:400;font-style:normal;color:#444;white-space:nowrap;transform:scaleX(0.9216);transform-origin:0 0;">0</div>
<div style="left:900.80px;position:absolute;top:385.90px;font-size:7px;line-height:7px;font-weight:400;font-style:normal;color:#444;white-space:nowrap;transform:scaleX(0.9412);transform-origin:0 0;">6,547</div>
<div style="left:488.80px;position:absolute;top:397.95px;font-size:7px;line-height:7px;font-weight:400;font-style:normal;color:#444;white-space:nowrap;transform:scaleX(0.9216);transform-origin:0 0;">4</div>
<div style="left:513.60px;position:absolute;top:397.95px;font-size:7px;line-height:7px;font-weight:400;font-style:normal;color:#444;white-space:nowrap;transform:scaleX(0.9216);transform-origin:0 0;">0</div>
<div style="left:650.20px;position:absolute;top:397.95px;font-size:7px;line-height:7px;font-weight:400;font-style:normal;color:#444;white-space:nowrap;transform:scaleX(0.9216);transform-origin:0 0;">0</div>
<div style="left:764.00px;position:absolute;top:397.95px;font-size:7px;line-height:7px;font-weight:400;font-style:normal;color:#444;white-space:nowrap;transform:scaleX(0.9216);transform-origin:0 0;">0</div>
<div style="left:900.80px;position:absolute;top:397.95px;font-size:7px;line-height:7px;font-weight:400;font-style:normal;color:#444;white-space:nowrap;transform:scaleX(0.9412);transform-origin:0 0;">2,848</div>
<div style="left:488.80px;position:absolute;top:410.00px;font-size:7px;line-height:7px;font-weight:400;font-style:normal;color:#444;white-space:nowrap;transform:scaleX(0.9216);transform-origin:0 0;">5</div>
<div style="left:513.60px;position:absolute;top:410.00px;font-size:7px;line-height:7px;font-weight:400;font-style:normal;color:#444;white-space:nowrap;transform:scaleX(0.9216);transform-origin:0 0;">0</div>
<div style="left:650.20px;position:absolute;top:410.00px;font-size:7px;line-height:7px;font-weight:400;font-style:normal;color:#444;white-space:nowrap;transform:scaleX(0.9216);transform-origin:0 0;">0</div>
<div style="left:764.00px;position:absolute;top:410.00px;font-size:7px;line-height:7px;font-weight:400;font-style:normal;color:#444;white-space:nowrap;transform:scaleX(0.9216);transform-origin:0 0;">0</div>
<div style="left:900.80px;position:absolute;top:410.00px;font-size:7px;line-height:7px;font-weight:400;font-style:normal;color:#444;white-space:nowrap;transform:scaleX(0.9412);transform-origin:0 0;">5,379</div>
<svg style="position:absolute;left:917.5px;top:361px" width="5" height="4" viewBox="0 0 5 4"><path d="M0.8 3.2 L2.5 1 L4.2 3.2 Z" fill="#333"/></svg>
<div style="position:absolute;left:917.8px;top:366.8px;width:4px;height:8px;background:#c4c4c4;"></div>
<svg style="position:absolute;left:917.5px;top:413px" width="5" height="4" viewBox="0 0 5 4"><path d="M0.8 0.8 L2.5 3 L4.2 0.8 Z" fill="#333"/></svg>
<svg style="position:absolute;left:489px;top:420.5px" width="4" height="4" viewBox="0 0 4 4"><path d="M3 0.5 L1 2 L3 3.5 Z" fill="#444"/></svg>
<div style="position:absolute;left:494px;top:420.5px;width:11.5px;height:3.8px;background:#c8c8c8;"></div>
<svg style="position:absolute;left:911px;top:420.5px" width="4" height="4" viewBox="0 0 4 4"><path d="M1 0.5 L3 2 L1 3.5 Z" fill="#444"/></svg>
</body></html>
